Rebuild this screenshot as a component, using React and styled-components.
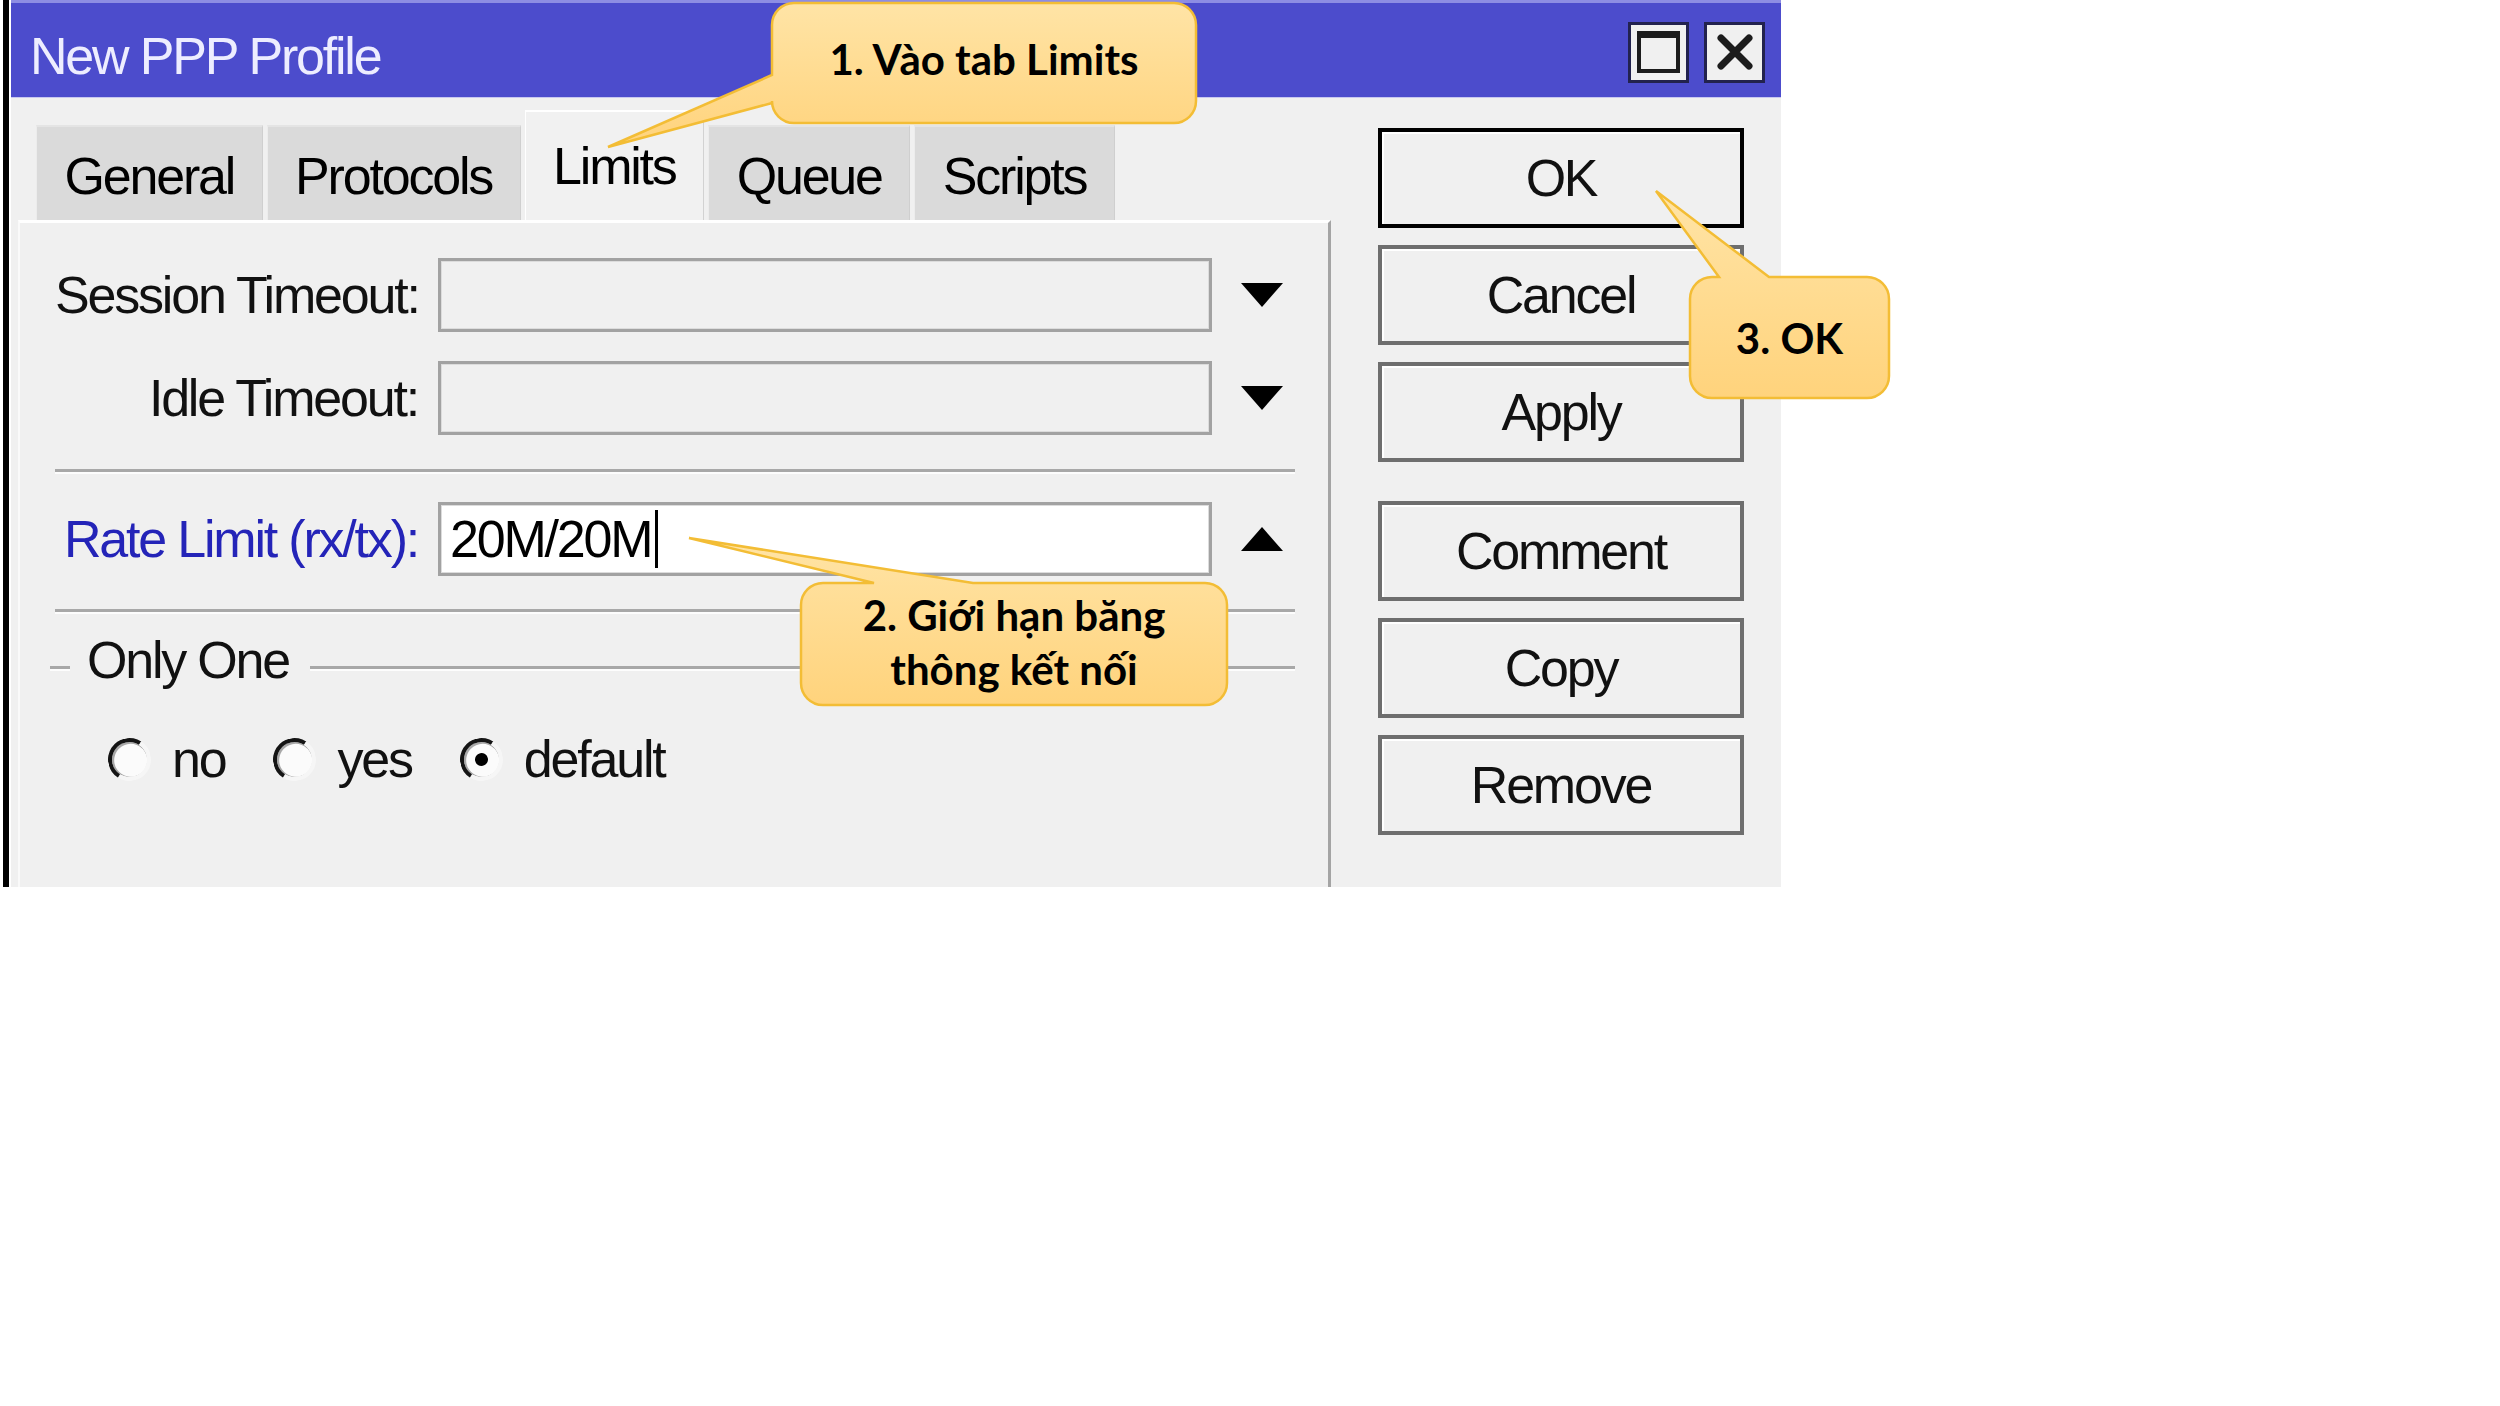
import React from 'react';
import styled, { createGlobalStyle, css } from 'styled-components';

const GlobalStyle = createGlobalStyle`
  html, body { margin: 0; padding: 0; background: #ffffff; }
  body { width: 2500px; height: 1406px; overflow: hidden; font-family: "Liberation Sans", Arial, sans-serif; }
  * { box-sizing: border-box; }
`;

const uiFont = css`
  font-family: "Liberation Sans", Arial, sans-serif;
  font-size: 52px;
  letter-spacing: -2.2px;
  line-height: 52px;
  white-space: nowrap;
`;

const Page = styled.div`
  position: relative;
  width: 2500px;
  height: 1406px;
  background: #ffffff;
`;

const Window = styled.div`
  margin-left: 3px;
  width: 1778px;
  height: 887px;
  display: flex;
  border-left: 6px solid #000000;
`;

const Frame = styled.div`
  flex: 1;
  display: flex;
  flex-direction: column;
  border-left: 2px solid #ffffff;
`;

const TitleBar = styled.div`
  height: 98px;
  border-top: 3px solid #8d8de3;
  border-bottom: 1px solid #c8c8f0;
  background: #4c4ccc;
  display: flex;
  align-items: center;
  padding: 0 16px 0 19px;
`;

const TitleText = styled.span`
  ${uiFont};
  color: #ededff;
  margin-top: 12px;
`;

const WindowControls = styled.div`
  margin-left: auto;
  display: flex;
  gap: 15px;
  margin-top: 4px;
`;

const ControlButton = styled.div`
  width: 61px;
  height: 61px;
  border: 3px solid #22224e;
  background: #f0f0f0;
  display: flex;
  align-items: center;
  justify-content: center;
`;

const Body = styled.div`
  flex: 1;
  display: flex;
  padding-top: 12px;
  background: #f0f0f0;
`;

const MainColumn = styled.div`
  width: 1320px;
  display: flex;
  flex-direction: column;
`;

const TabBar = styled.div`
  height: 110px;
  margin-left: 25px;
  display: flex;
  align-items: flex-end;
  gap: 4px;
`;

const Tab = styled.div`
  ${uiFont};
  height: ${p => (p.$active ? 110 : 95)}px;
  padding: 0 27.5px;
  display: flex;
  align-items: center;
  justify-content: center;
  color: #000;
  background: ${p => (p.$active ? '#f1f1f1' : '#dadada')};
  border-top: 2px solid ${p => (p.$active ? '#ffffff' : '#e4e4e4')};
  border-left: 1px solid ${p => (p.$active ? '#ffffff' : '#ececec')};
  border-right: 1px solid ${p => (p.$active ? '#d2d2d2' : '#cfcfcf')};
  padding-top: ${p => (p.$active ? 0 : 4)}px;
`;

const Panel = styled.div`
  flex: 1;
  margin-left: 7px;
  border-top: 3px solid #ffffff;
  border-left: 2px solid #fafafa;
  border-right: 3px solid #a4a4a4;
  padding: 35px 33px 0 35px;
  display: flex;
  flex-direction: column;
`;

const FieldRow = styled.div`
  display: grid;
  grid-template-columns: 363px 774px 1fr;
  column-gap: 20px;
  align-items: center;
  height: 74px;
  margin-top: ${p => p.$gap || 0}px;
`;

const FieldLabel = styled.div`
  ${uiFont};
  text-align: right;
  color: ${p => (p.$accent ? '#2424b8' : '#111111')};
`;

const FieldBox = styled.div`
  ${uiFont};
  height: 74px;
  border: 3px solid #a2a2a2;
  box-shadow: inset 0 0 0 1px #dcdcdc;
  background: ${p => (p.$filled ? '#ffffff' : '#f0f0f0')};
  display: flex;
  align-items: center;
  padding-left: 9px;
  color: #000;
`;

const Caret = styled.span`
  display: inline-block;
  width: 3px;
  height: 58px;
  background: #000;
  margin-left: 4px;
`;

const ArrowCell = styled.div`
  display: flex;
  align-items: center;
  padding-left: 9px;
`;

const Triangle = styled.span`
  width: 0;
  height: 0;
  border-left: 21px solid transparent;
  border-right: 21px solid transparent;
  ${p =>
    p.$dir === 'up'
      ? css`border-bottom: 24px solid #000;`
      : css`border-top: 24px solid #000;`}
`;

const Separator = styled.div`
  height: 5px;
  border-top: 3px solid #a8a8a8;
  border-bottom: 2px solid #fdfdfd;
  margin-top: ${p => p.$gap}px;
`;

const GroupHeader = styled.div`
  height: 56px;
  margin-top: 26px;
  margin-left: -5px;
  display: flex;
  align-items: center;
`;

const GroupRule = styled.span`
  height: 5px;
  border-top: 3px solid #a8a8a8;
  border-bottom: 2px solid #fdfdfd;
  width: ${p => (p.$grow ? 'auto' : '20px')};
  flex: ${p => (p.$grow ? 1 : 'none')};
`;

const GroupTitle = styled.span`
  ${uiFont};
  color: #111;
  padding: 0 21px 0 17px;
  margin-bottom: 16px;
`;

const RadioRow = styled.div`
  margin-top: 37px;
  margin-left: 53px;
  display: flex;
  align-items: center;
  gap: 48px;
`;

const RadioItem = styled.label`
  display: flex;
  align-items: center;
  gap: 21px;
`;

const RadioCircle = styled.span`
  width: 43px;
  height: 43px;
  border-radius: 50%;
  border: 4px solid;
  border-color: #141414 #f6f6f6 #f6f6f6 #141414;
  background: #fbfbfb;
  box-shadow: inset 1px 1px 0 1px #a8a8a8;
  display: flex;
  align-items: center;
  justify-content: center;
  transform: rotate(-12deg);
`;

const RadioDot = styled.span`
  width: 13px;
  height: 13px;
  border-radius: 50%;
  background: #000;
`;

const RadioText = styled.span`
  ${uiFont};
  color: #111;
`;

const ButtonColumn = styled.div`
  width: 366px;
  margin-left: 47px;
  padding-top: 18px;
  display: flex;
  flex-direction: column;
  gap: 17px;
`;

const ButtonGroup = styled.div`
  display: flex;
  flex-direction: column;
  gap: 17px;
  margin-top: ${p => p.$gap || 0}px;
`;

const DialogButton = styled.div`
  ${uiFont};
  height: 100px;
  border: 4px solid ${p => (p.$primary ? '#000000' : '#6e6e6e')};
  box-shadow: inset 2px 2px 0 #ffffff;
  background: #f0f0f0;
  display: flex;
  align-items: center;
  justify-content: center;
  color: #111;
`;

const CalloutBox = styled.div`
  position: absolute;
  left: ${p => p.$x}px;
  top: ${p => p.$y}px;
  width: ${p => p.$w}px;
  height: ${p => p.$h}px;
  z-index: 2;
  display: flex;
  align-items: center;
  justify-content: center;
  text-align: center;
  padding-bottom: ${p => p.$lift || 0}px;
  font-family: Lato, "Open Sans", "Noto Sans", sans-serif;
  font-weight: 700;
  font-size: 42px;
  line-height: 54px;
  color: #000;
`;

const CalloutShape = styled.svg`
  position: absolute;
  left: 0;
  top: 0;
  overflow: visible;
  z-index: -1;
`;

function calloutPath(w, h, r, tail) {
  const [tx, ty] = tail.tip;
  if (tail.side === 'left') {
    return `M ${r} 0 H ${w - r} A ${r} ${r} 0 0 1 ${w} ${r} V ${h - r} A ${r} ${r} 0 0 1 ${w - r} ${h} H ${r} A ${r} ${r} 0 0 1 0 ${h - r} V ${tail.b} L ${tx} ${ty} L 0 ${tail.a} V ${r} A ${r} ${r} 0 0 1 ${r} 0 Z`;
  }
  return `M 0 ${r} A ${r} ${r} 0 0 1 ${r} 0 H ${tail.a} L ${tx} ${ty} L ${tail.b} 0 H ${w - r} A ${r} ${r} 0 0 1 ${w} ${r} V ${h - r} A ${r} ${r} 0 0 1 ${w - r} ${h} H ${r} A ${r} ${r} 0 0 1 0 ${h - r} Z`;
}

function Callout({ id, x, y, w, h, lift, tail, children }) {
  return (
    <CalloutBox $x={x} $y={y} $w={w} $h={h} $lift={lift}>
      <CalloutShape width={w} height={h}>
        <defs>
          <linearGradient id={id} x1="0" y1="0" x2="0" y2="1">
            <stop offset="0" stopColor="#ffe4a6" />
            <stop offset="1" stopColor="#ffd37c" />
          </linearGradient>
        </defs>
        <path d={calloutPath(w, h, 22, tail)} fill={`url(#${id})`} stroke="#f3bd35" strokeWidth="2.5" />
      </CalloutShape>
      <div>{children}</div>
    </CalloutBox>
  );
}

const MaxIcon = () => (
  <svg width="43" height="42" viewBox="0 0 43 42">
    <rect x="2" y="2" width="39" height="38" fill="none" stroke="#1c1c1c" strokeWidth="4" />
    <rect x="0" y="0" width="43" height="7" fill="#1c1c1c" />
  </svg>
);

const CloseIcon = () => (
  <svg width="38" height="36" viewBox="0 0 38 36">
    <path d="M5 4 L33 32 M33 4 L5 32" stroke="#1c1c1c" strokeWidth="7" strokeLinecap="round" />
  </svg>
);

const tabs = ['General', 'Protocols', 'Limits', 'Queue', 'Scripts'];

export default function App() {
  return (
    <>
      <GlobalStyle />
      <Page>
        <Window>
          <Frame>
            <TitleBar>
              <TitleText>New PPP Profile</TitleText>
              <WindowControls>
                <ControlButton><MaxIcon /></ControlButton>
                <ControlButton><CloseIcon /></ControlButton>
              </WindowControls>
            </TitleBar>
            <Body>
              <MainColumn>
                <TabBar>
                  {tabs.map(t => (
                    <Tab key={t} $active={t === 'Limits'}>{t}</Tab>
                  ))}
                </TabBar>
                <Panel>
                  <FieldRow>
                    <FieldLabel>Session Timeout:</FieldLabel>
                    <FieldBox />
                    <ArrowCell><Triangle $dir="down" /></ArrowCell>
                  </FieldRow>
                  <FieldRow $gap={29}>
                    <FieldLabel>Idle Timeout:</FieldLabel>
                    <FieldBox />
                    <ArrowCell><Triangle $dir="down" /></ArrowCell>
                  </FieldRow>
                  <Separator $gap={34} />
                  <FieldRow $gap={28}>
                    <FieldLabel $accent>Rate Limit (rx/tx):</FieldLabel>
                    <FieldBox $filled>20M/20M<Caret /></FieldBox>
                    <ArrowCell><Triangle $dir="up" /></ArrowCell>
                  </FieldRow>
                  <Separator $gap={33} />
                  <GroupHeader>
                    <GroupRule />
                    <GroupTitle>Only One</GroupTitle>
                    <GroupRule $grow />
                  </GroupHeader>
                  <RadioRow>
                    <RadioItem><RadioCircle /><RadioText>no</RadioText></RadioItem>
                    <RadioItem><RadioCircle /><RadioText>yes</RadioText></RadioItem>
                    <RadioItem><RadioCircle><RadioDot /></RadioCircle><RadioText>default</RadioText></RadioItem>
                  </RadioRow>
                </Panel>
              </MainColumn>
              <ButtonColumn>
                <ButtonGroup>
                  <DialogButton $primary>OK</DialogButton>
                  <DialogButton>Cancel</DialogButton>
                  <DialogButton>Apply</DialogButton>
                </ButtonGroup>
                <ButtonGroup $gap={22}>
                  <DialogButton>Comment</DialogButton>
                  <DialogButton>Copy</DialogButton>
                  <DialogButton>Remove</DialogButton>
                </ButtonGroup>
              </ButtonColumn>
            </Body>
          </Frame>
        </Window>

        <Callout id="cg1" x={772} y={3} w={424} h={120} lift={8} tail={{ side: 'left', a: 72, b: 100, tip: [-164, 144] }}>
          1. Vào tab Limits
        </Callout>
        <Callout id="cg2" x={801} y={583} w={426} h={122} lift={4} tail={{ side: 'top', a: 73, b: 172, tip: [-112, -45] }}>
          2. Giới hạn băng<br />thông kết nối
        </Callout>
        <Callout id="cg3" x={1690} y={277} w={199} h={121} tail={{ side: 'top', a: 29, b: 79, tip: [-34, -86] }}>
          3. OK
        </Callout>
      </Page>
    </>
  );
}
